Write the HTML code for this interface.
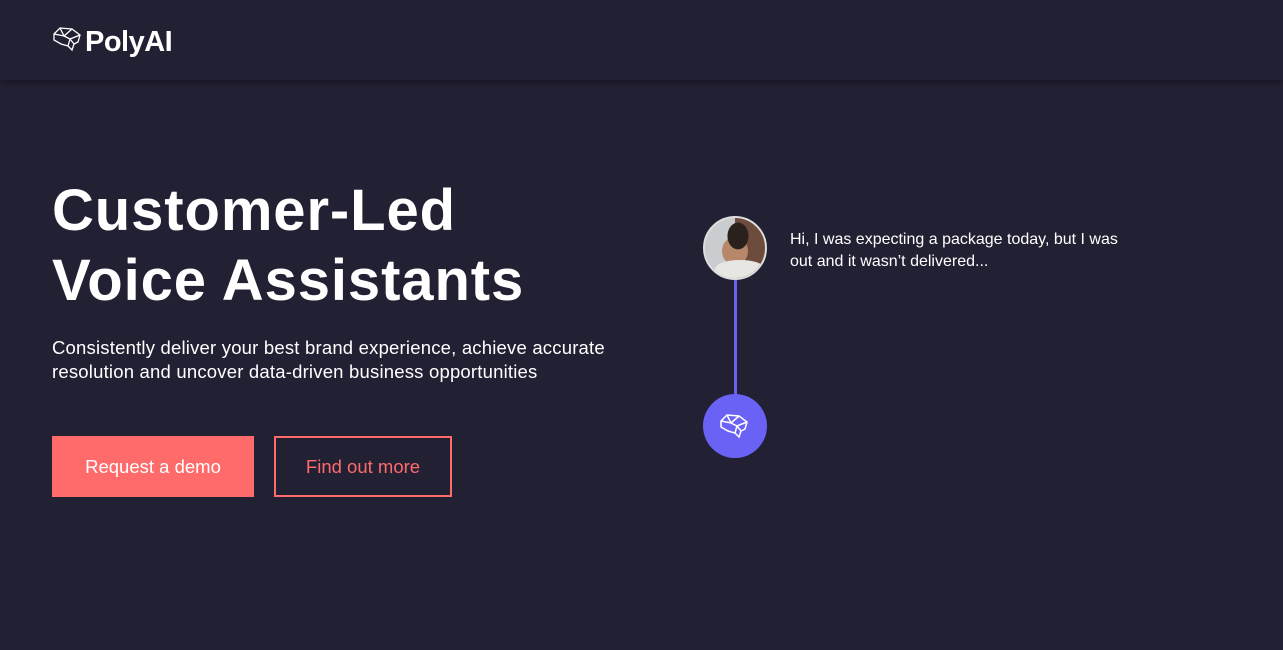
<!DOCTYPE html>
<html><head><meta charset="utf-8"><style>
*{margin:0;padding:0;box-sizing:border-box}
body{width:1283px;height:650px;background:#222033;font-family:"Liberation Sans",sans-serif;color:#fff;overflow:hidden;position:relative}
.hdr{position:absolute;top:0;left:0;width:1283px;height:80px;background:#222033;box-shadow:0 2px 6px rgba(0,0,0,.35)}
.logo{position:absolute;left:52px;top:18px;display:flex;align-items:center}
.logo span{font-size:29px;font-weight:bold;letter-spacing:-0.5px;margin-left:1px;margin-top:8px}
h1{position:absolute;left:52px;top:176px;font-size:58px;line-height:70px;font-weight:bold;letter-spacing:0.9px}
p.sub{position:absolute;left:52px;top:336px;font-size:18.5px;line-height:24px;width:600px;letter-spacing:0.2px}
.b1{position:absolute;left:52px;top:436px;width:202px;height:61px;background:#ff6b6b;color:#fff;font-size:18.5px;display:flex;align-items:center;justify-content:center}
.b2{position:absolute;left:274px;top:436px;width:178px;height:61px;border:2px solid #ff6b6b;color:#ff6b6b;font-size:18.5px;display:flex;align-items:center;justify-content:center}
.line{position:absolute;left:734px;top:278px;width:3px;height:120px;background:#6a62f5}
.av{position:absolute;left:703px;top:216px;width:64px;height:64px;border-radius:50%;border:2px solid #ddd;overflow:hidden;background:radial-gradient(ellipse at 55% 30%,#2a211d 0 22%,transparent 23%),radial-gradient(ellipse at 50% 55%,#b8876a 0 30%,transparent 31%),linear-gradient(90deg,#c9cdd0 0 50%,#6d4c3d 50%);}
.av::after{content:"";position:absolute;left:10px;bottom:0;width:50px;height:18px;border-radius:50% 50% 0 0;background:#e8e6e3}
.bot{position:absolute;left:703px;top:394px;width:64px;height:64px;border-radius:50%;background:#6a62f5;display:flex;align-items:center;justify-content:center}
.msg{position:absolute;left:790px;top:229px;font-size:16px;line-height:22px;width:350px}
</style></head><body>
<div class="hdr"><div class="logo">
<svg width="32" height="26" viewBox="0 0 32 26" fill="none" stroke="#fff" stroke-width="1.3"><path d="M2 8 L8 2 L20 3 L28 9 L26 16 L22 18 L20 24 L16 20 L9 18 L2 14 Z M8 2 L12 10 L2 8 M12 10 L20 3 M12 10 L18 13 L28 9 M18 13 L16 20 M18 13 L22 18"/></svg>
<span>PolyAI</span></div></div>
<h1>Customer-Led<br>Voice Assistants</h1>
<p class="sub">Consistently deliver your best brand experience, achieve accurate resolution and uncover data-driven business opportunities</p>
<div class="b1">Request a demo</div>
<div class="b2">Find out more</div>
<div class="line"></div>
<div class="av"></div>
<div class="bot"><svg width="32" height="26" viewBox="0 0 32 26" fill="none" stroke="#fff" stroke-width="1.5"><path d="M2 8 L8 2 L20 3 L28 9 L26 16 L22 18 L20 24 L16 20 L9 18 L2 14 Z M8 2 L12 10 L2 8 M12 10 L20 3 M12 10 L18 13 L28 9 M18 13 L16 20 M18 13 L22 18"/></svg></div>
<div class="msg">Hi, I was expecting a package today, but I was out and it wasn’t delivered...</div>
</body></html>
